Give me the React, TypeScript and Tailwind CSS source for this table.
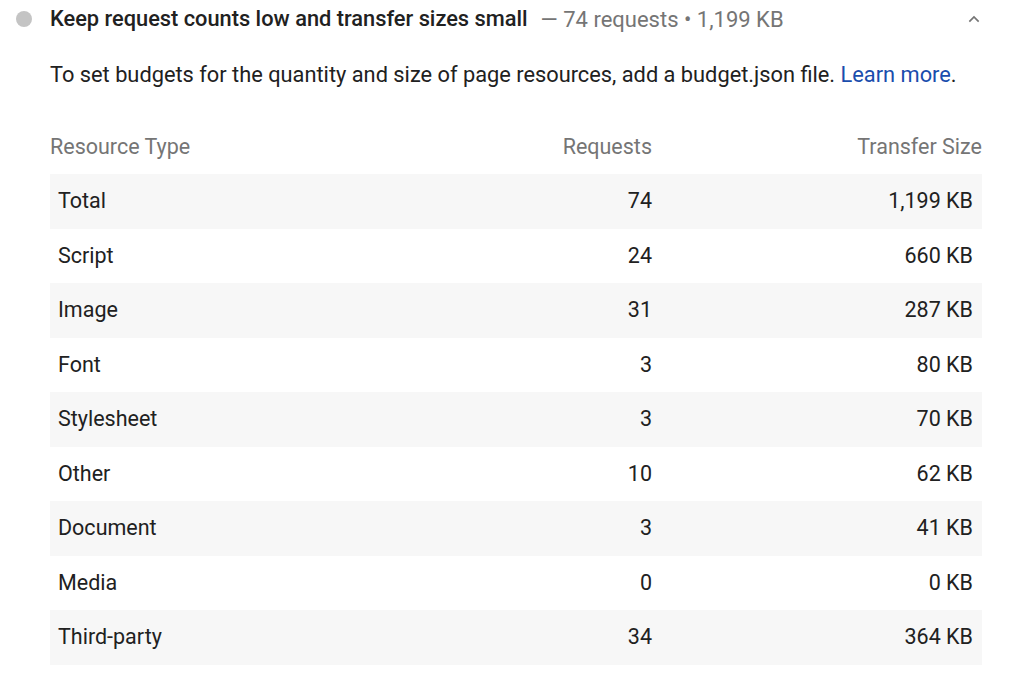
import React from "react";

type Row = { type: string; requests: number; size: string };

const rows: Row[] = [
  { type: "Total", requests: 74, size: "1,199 KB" },
  { type: "Script", requests: 24, size: "660 KB" },
  { type: "Image", requests: 31, size: "287 KB" },
  { type: "Font", requests: 3, size: "80 KB" },
  { type: "Stylesheet", requests: 3, size: "70 KB" },
  { type: "Other", requests: 10, size: "62 KB" },
  { type: "Document", requests: 3, size: "41 KB" },
  { type: "Media", requests: 0, size: "0 KB" },
  { type: "Third-party", requests: 34, size: "364 KB" },
];

export default function App() {
  return (
    <div
      className="w-[1024px] h-[673px] bg-white overflow-hidden text-[#212121]"
      style={{ fontFamily: "Roboto, 'Liberation Sans', sans-serif" }}
    >
      {/* audit header */}
      <div className="flex items-center h-[38px] pl-[16px] pr-[42px]">
        <span className="w-[16px] h-[16px] rounded-full bg-[#c4c4c4] shrink-0" />
        <span className="ml-[18px] text-[21.8px] font-medium">
          Keep request counts low and transfer sizes small
        </span>
        <span className="ml-[13px] text-[22px] text-[#757575]">
          — 74 requests • 1,199 KB
        </span>
        <svg
          className="ml-auto"
          width="16"
          height="16"
          viewBox="0 0 24 24"
          fill="none"
          stroke="#757575"
          strokeWidth="2.5"
        >
          <path d="M5 16l7-7 7 7" />
        </svg>
      </div>

      <div className="pl-[50px] pr-[42px]">
        <p className="mt-[22px] text-[21.8px] leading-[30px] text-[#212121]">
          To set budgets for the quantity and size of page resources, add a budget.json file.{" "}
          <span className="text-[#1a4dad]">Learn more</span>.
        </p>

        {/* resource table */}
        <div className="mt-[41px] text-[21.5px]">
          <div className="flex h-[43px] items-start text-[#757575]">
            <div className="flex-1">Resource Type</div>
            <div className="w-[200px] text-right">Requests</div>
            <div className="w-[330px] text-right">Transfer Size</div>
          </div>
          {rows.map((r, i) => (
            <div
              key={r.type}
              className={
                "flex items-center h-[54.5px] " + (i % 2 === 0 ? "bg-[#f7f7f7]" : "")
              }
            >
              <div className="flex-1 pl-[8px]">{r.type}</div>
              <div className="w-[200px] text-right">{r.requests}</div>
              <div className="w-[330px] text-right pr-[9px]">{r.size}</div>
            </div>
          ))}
        </div>
      </div>
    </div>
  );
}
